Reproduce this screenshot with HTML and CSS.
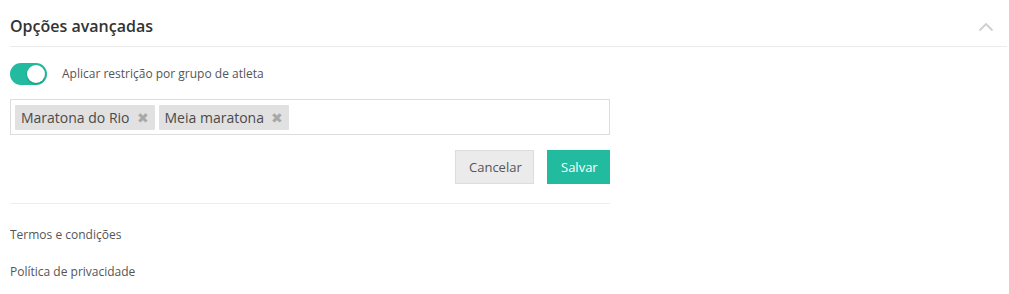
FILE: index.html
```html
<!DOCTYPE html>
<html lang="pt">
<head>
<meta charset="utf-8">
<link rel="stylesheet" href="styles.css">
</head>
<body>
<div class="page">
  <div class="section-head">
    <h2 class="section-title">Opções avançadas</h2>
    <svg class="chevron" width="16" height="10" viewBox="0 0 16 10"><path d="M1.5 8.5 L8 2 L14.5 8.5" fill="none" stroke="#cfcfcf" stroke-width="1.8"/></svg>
  </div>
  <div class="form">
    <div class="toggle-row">
      <span class="toggle"><span class="knob"></span></span>
      <span class="toggle-label">Aplicar restrição por grupo de atleta</span>
    </div>
    <div class="tag-input">
      <span class="tag">Maratona do Rio <span class="tag-x">✖</span></span>
      <span class="tag">Meia maratona <span class="tag-x">✖</span></span>
    </div>
    <div class="actions">
      <button class="btn btn-cancel">Cancelar</button>
      <button class="btn btn-save">Salvar</button>
    </div>
    <div class="footer">
      <a class="footer-link">Termos e condições</a>
      <a class="footer-link">Política de privacidade</a>
    </div>
  </div>
</div>
</body>
</html>
```
FILE: styles.css
```css
* { box-sizing: border-box; }
html, body { margin: 0; padding: 0; background: #fff; }
body { font-family: "Open Sans", "Noto Sans", sans-serif; color: #555; }
.page { padding: 0 2px 0 10px; }
.section-head {
  display: flex; align-items: center; justify-content: space-between;
  height: 47px; border-bottom: 1px solid #ebebeb;
  padding-top: 6px;
}
.section-title { margin: 0; font-size: 16px; font-weight: 600; color: #333; line-height: 22px; }
.chevron { margin-right: 13px; margin-top: 2px; }
.form { width: 600px; }
.toggle-row { display: flex; align-items: center; margin-top: 15px; height: 23px; }
.toggle {
  width: 37px; height: 22px; border-radius: 11px; background: #22bb9f;
  position: relative; flex: none;
}
.knob {
  position: absolute; right: 2px; top: 2px; width: 18px; height: 18px;
  border-radius: 50%; background: #fff; box-shadow: 0 1px 2px rgba(0,0,0,.25);
}
.toggle-label { margin-left: 15px; font-size: 12px; color: #555; }
.tag-input {
  margin-top: 14px; height: 36px; border: 1px solid #ddd;
  display: flex; align-items: center; gap: 4px; padding: 0 4px;
}
.tag {
  display: inline-flex; align-items: center; height: 25px; padding: 0 6px;
  background: #e1e1e1; font-size: 14px; color: #4a4a4a; border-radius: 1px;
}
.tag-x { color: #a8a8a8; font-size: 14px; margin-left: 7px; }
.actions { display: flex; justify-content: flex-end; gap: 13px; margin-top: 15px; }
.btn {
  height: 34px; border: 1px solid transparent; font-family: inherit; font-size: 13px;
  padding: 0 13px; cursor: pointer;
}
.btn-cancel { background: #ebebeb; border-color: #ddd; color: #555; width: 79px; }
.btn-save { background: #22bb9f; color: #fff; width: 63px; }
.footer { margin-top: 19px; border-top: 1px solid #eee; padding-top: 22px; display: flex; flex-direction: column; gap: 20px; }
.footer-link { font-size: 12px; color: #555; line-height: 17px; }
```
